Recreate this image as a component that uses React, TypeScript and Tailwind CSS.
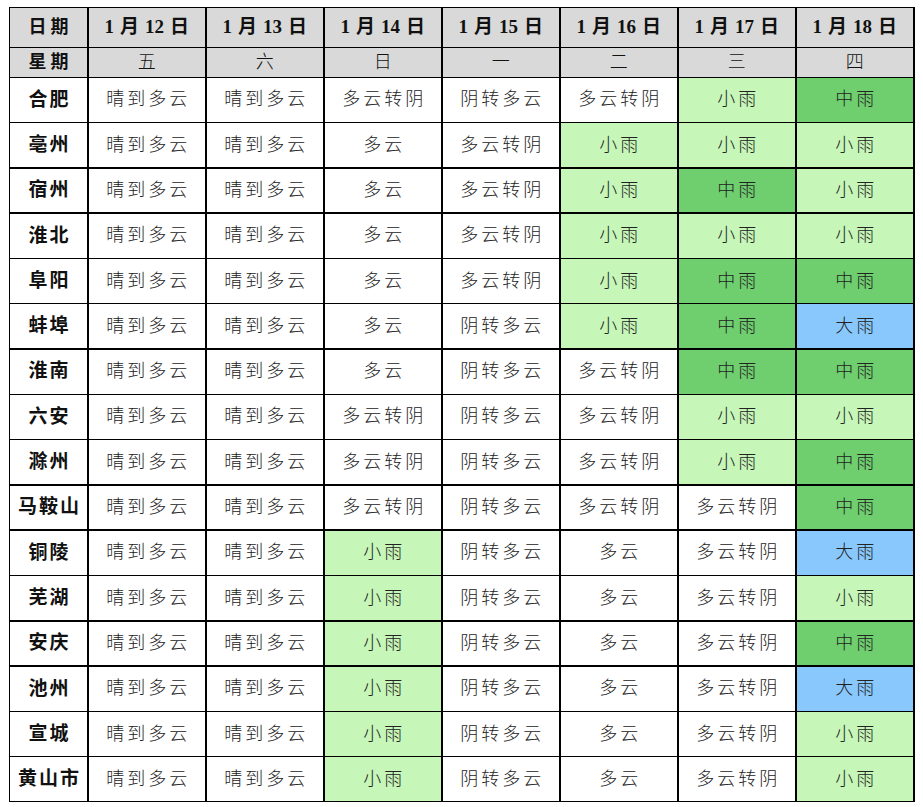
import React from 'react';

type Tone = 'n' | 'l' | 'm' | 'b';

const dates = ['12', '13', '14', '15', '16', '17', '18'];
const weekdays = ['五', '六', '日', '一', '二', '三', '四'];

const rows: [string, [string, Tone][]][] = [
  ['合肥', [['晴到多云', 'n'], ['晴到多云', 'n'], ['多云转阴', 'n'], ['阴转多云', 'n'], ['多云转阴', 'n'], ['小雨', 'l'], ['中雨', 'm']]],
  ['亳州', [['晴到多云', 'n'], ['晴到多云', 'n'], ['多云', 'n'], ['多云转阴', 'n'], ['小雨', 'l'], ['小雨', 'l'], ['小雨', 'l']]],
  ['宿州', [['晴到多云', 'n'], ['晴到多云', 'n'], ['多云', 'n'], ['多云转阴', 'n'], ['小雨', 'l'], ['中雨', 'm'], ['小雨', 'l']]],
  ['淮北', [['晴到多云', 'n'], ['晴到多云', 'n'], ['多云', 'n'], ['多云转阴', 'n'], ['小雨', 'l'], ['小雨', 'l'], ['小雨', 'l']]],
  ['阜阳', [['晴到多云', 'n'], ['晴到多云', 'n'], ['多云', 'n'], ['多云转阴', 'n'], ['小雨', 'l'], ['中雨', 'm'], ['中雨', 'm']]],
  ['蚌埠', [['晴到多云', 'n'], ['晴到多云', 'n'], ['多云', 'n'], ['阴转多云', 'n'], ['小雨', 'l'], ['中雨', 'm'], ['大雨', 'b']]],
  ['淮南', [['晴到多云', 'n'], ['晴到多云', 'n'], ['多云', 'n'], ['阴转多云', 'n'], ['多云转阴', 'n'], ['中雨', 'm'], ['中雨', 'm']]],
  ['六安', [['晴到多云', 'n'], ['晴到多云', 'n'], ['多云转阴', 'n'], ['阴转多云', 'n'], ['多云转阴', 'n'], ['小雨', 'l'], ['小雨', 'l']]],
  ['滁州', [['晴到多云', 'n'], ['晴到多云', 'n'], ['多云转阴', 'n'], ['阴转多云', 'n'], ['多云转阴', 'n'], ['小雨', 'l'], ['中雨', 'm']]],
  ['马鞍山', [['晴到多云', 'n'], ['晴到多云', 'n'], ['多云转阴', 'n'], ['阴转多云', 'n'], ['多云转阴', 'n'], ['多云转阴', 'n'], ['中雨', 'm']]],
  ['铜陵', [['晴到多云', 'n'], ['晴到多云', 'n'], ['小雨', 'l'], ['阴转多云', 'n'], ['多云', 'n'], ['多云转阴', 'n'], ['大雨', 'b']]],
  ['芜湖', [['晴到多云', 'n'], ['晴到多云', 'n'], ['小雨', 'l'], ['阴转多云', 'n'], ['多云', 'n'], ['多云转阴', 'n'], ['小雨', 'l']]],
  ['安庆', [['晴到多云', 'n'], ['晴到多云', 'n'], ['小雨', 'l'], ['阴转多云', 'n'], ['多云', 'n'], ['多云转阴', 'n'], ['中雨', 'm']]],
  ['池州', [['晴到多云', 'n'], ['晴到多云', 'n'], ['小雨', 'l'], ['阴转多云', 'n'], ['多云', 'n'], ['多云转阴', 'n'], ['大雨', 'b']]],
  ['宣城', [['晴到多云', 'n'], ['晴到多云', 'n'], ['小雨', 'l'], ['阴转多云', 'n'], ['多云', 'n'], ['多云转阴', 'n'], ['小雨', 'l']]],
  ['黄山市', [['晴到多云', 'n'], ['晴到多云', 'n'], ['小雨', 'l'], ['阴转多云', 'n'], ['多云', 'n'], ['多云转阴', 'n'], ['小雨', 'l']]],
];

const toneClass: Record<Tone, string> = {
  n: 'bg-white',
  l: 'bg-[#c6f6b8]',
  m: 'bg-[#6fcf6f]',
  b: 'bg-[#88c8fc]',
};

const font = "font-['Liberation_Serif','Noto_Sans_CJK_SC',serif]";

export default function App() {
  return (
    <div className="min-h-[807px] w-[923px] bg-white pl-[9px] pt-[7px]">
      <div
        className={`grid w-[906px] grid-cols-[77px_repeat(7,116.5px)] grid-rows-[38.5px_28.5px_repeat(16,43.8px)] gap-[1.5px] border-[1.5px] border-black bg-black ${font} text-[#111]`}
      >
        <div className="flex items-center justify-center bg-[#d9d9d9] text-[18px] font-bold tracking-[4px]">
          <span className="-mr-[4px]">日期</span>
        </div>
        {dates.map(d => (
          <div key={d} className="flex items-center justify-center gap-[6px] bg-[#d9d9d9] text-[19px] font-bold">
            <span>1</span>
            <span>月</span>
            <span>{d}</span>
            <span>日</span>
          </div>
        ))}
        <div className="flex items-center justify-center bg-[#d9d9d9] text-[18px] font-semibold tracking-[4px]">
          <span className="-mr-[4px]">星期</span>
        </div>
        {weekdays.map(w => (
          <div key={w} className="flex items-center justify-center bg-[#d9d9d9] text-[18px] font-light">
            {w}
          </div>
        ))}
        {rows.map(([city, cells]) => (
          <React.Fragment key={city}>
            <div className="flex items-center justify-center bg-white text-[19px] font-bold tracking-[2px]">
              <span className="-mr-[2px]">{city}</span>
            </div>
            {cells.map(([text, tone], i) => (
              <div
                key={i}
                className={`flex items-center justify-center text-[18px] font-light tracking-[3px] text-[#222] ${toneClass[tone]}`}
              >
                <span className="-mr-[3px]">{text}</span>
              </div>
            ))}
          </React.Fragment>
        ))}
      </div>
    </div>
  );
}
